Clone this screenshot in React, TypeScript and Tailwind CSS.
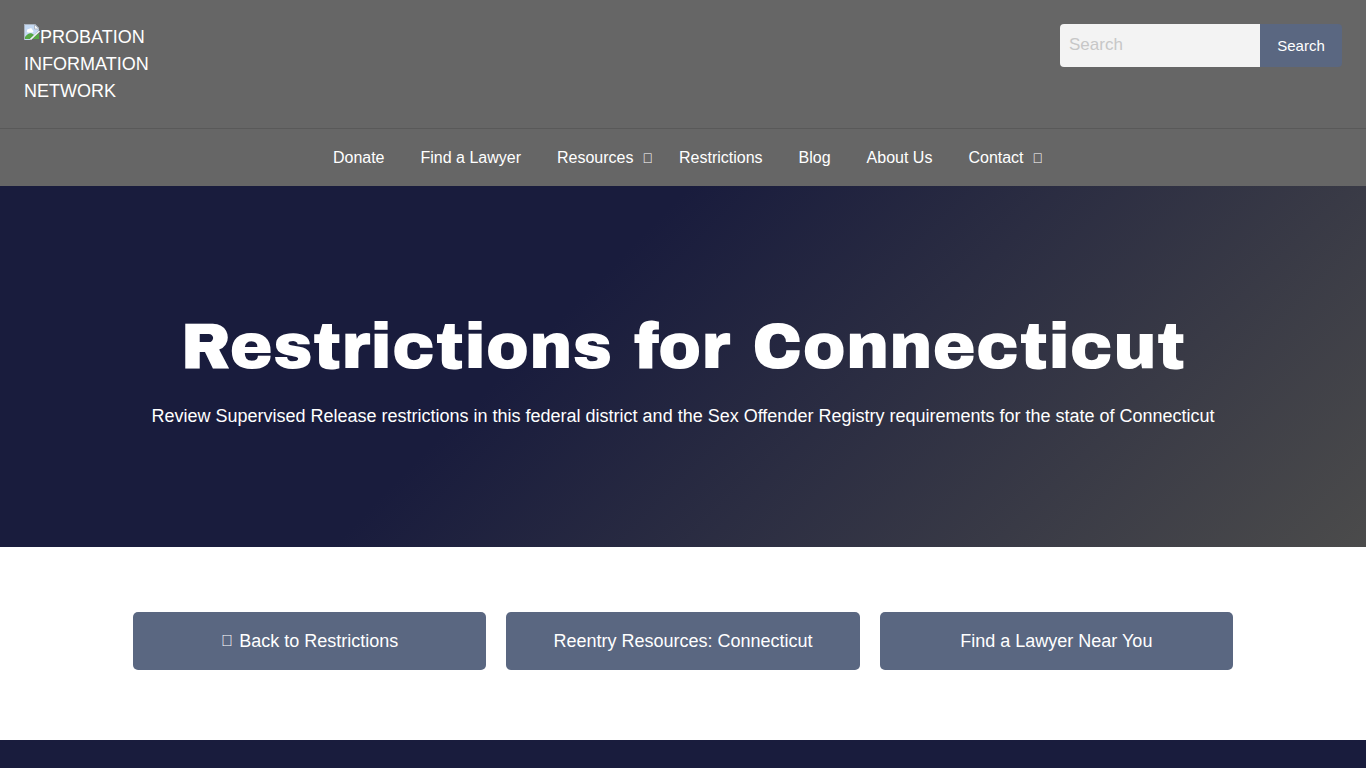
const navItems = [
  { label: "Donate" },
  { label: "Find a Lawyer" },
  { label: "Resources", menu: true },
  { label: "Restrictions" },
  { label: "Blog" },
  { label: "About Us" },
  { label: "Contact", menu: true },
];

const actions = [
  { label: "Back to Restrictions", icon: "\uf060" },
  { label: "Reentry Resources: Connecticut" },
  { label: "Find a Lawyer Near You" },
];

function MissingImageIcon() {
  return (
    <svg className="inline-block align-top" width="16" height="16" viewBox="0 0 16 16" aria-hidden="true">
      <path d="M0 0h11l4 4v2L6 16H0z" fill="#c4d9f3" />
      <path d="M0 0h11v1H1v15H0z" fill="#aab3bf" />
      <path d="M3 6.500a1.500 1.500 0 0 1 2-1.500a2 2 0 0 1 3.500 1a1.300 1.300 0 0 1 0 2.500H4a1.300 1.300 0 0 1-1-2z" fill="#fff" />
      <path d="M1 15v-2c3-4 6-5 9-2l-4 4H1z" fill="#56a846" />
      <path d="M10.500.500v4.500h4.500z" fill="#f4f7fa" stroke="#9da5b0" strokeWidth=".7" />
      <path d="M8 15h7V9z" fill="#56a846" />
      <path d="M6.500 15.500l9-8.500" stroke="#f4f7fa" strokeWidth="1.500" />
    </svg>
  );
}

export default function App() {
  return (
    <div className="min-h-screen bg-[#191c3d] font-['Liberation_Sans',Arial,sans-serif] text-lg text-white">
      <header className="bg-[#666666]">
        <div className="flex items-start justify-between border-b border-[#595959] px-6 pt-6 pb-[23px]">
          <a href="#" className="block w-[150px] leading-[27px]">
            <MissingImageIcon />
            PROBATION INFORMATION NETWORK
          </a>
          <form className="flex h-[43px]" role="search" onSubmit={(e) => e.preventDefault()}>
            <input
              type="search"
              aria-label="Search"
              placeholder="Search"
              className="w-[200px] rounded-l bg-[#f3f3f3] px-[9px] pb-px text-[17px] text-[#333333] outline-none placeholder:text-[#c7c7c7]"
            />
            <button type="submit" className="w-[82px] rounded-r bg-[#5a6781] text-[15px]">
              Search
            </button>
          </form>
        </div>
        <nav className="flex h-[57px] items-center justify-center text-base" aria-label="Main">
          <ul className="flex">
            {navItems.map((item) => (
              <li key={item.label}>
                <a href="#" className={item.menu ? "flex items-baseline gap-[9px] pl-[18px] pr-2" : "block px-[18px]"}>
                  {item.label}
                  {item.menu && (
                    <span className="text-sm" aria-hidden="true">
                      {"\uf107"}
                    </span>
                  )}
                </a>
              </li>
            ))}
          </ul>
        </nav>
      </header>

      <section className="bg-[linear-gradient(135deg,#191c3d_40%,#4b4b4b_100%)] px-6 pt-[121px] pb-[117px] text-center">
        <h1 className="font-['Archivo_Black','Arial_Black',Inter,sans-serif] text-[65px] leading-20 font-normal">
          Restrictions for Connecticut
        </h1>
        <p className="mt-[15px] leading-7">
          Review Supervised Release restrictions in this federal district and the Sex Offender Registry requirements for
          the state of Connecticut
        </p>
      </section>

      <section className="bg-white px-6 pt-[65px] pb-[70px]">
        <div className="mx-auto grid max-w-[1100px] grid-cols-3 gap-5">
          {actions.map((action) => (
            <a
              key={action.label}
              href="#"
              className="flex h-[58px] items-center justify-center gap-[6px] rounded-[5px] bg-[#5a6781]"
            >
              {action.icon && (
                <span className="text-base" aria-hidden="true">
                  {action.icon}
                </span>
              )}
              {action.label}
            </a>
          ))}
        </div>
      </section>
    </div>
  );
}
